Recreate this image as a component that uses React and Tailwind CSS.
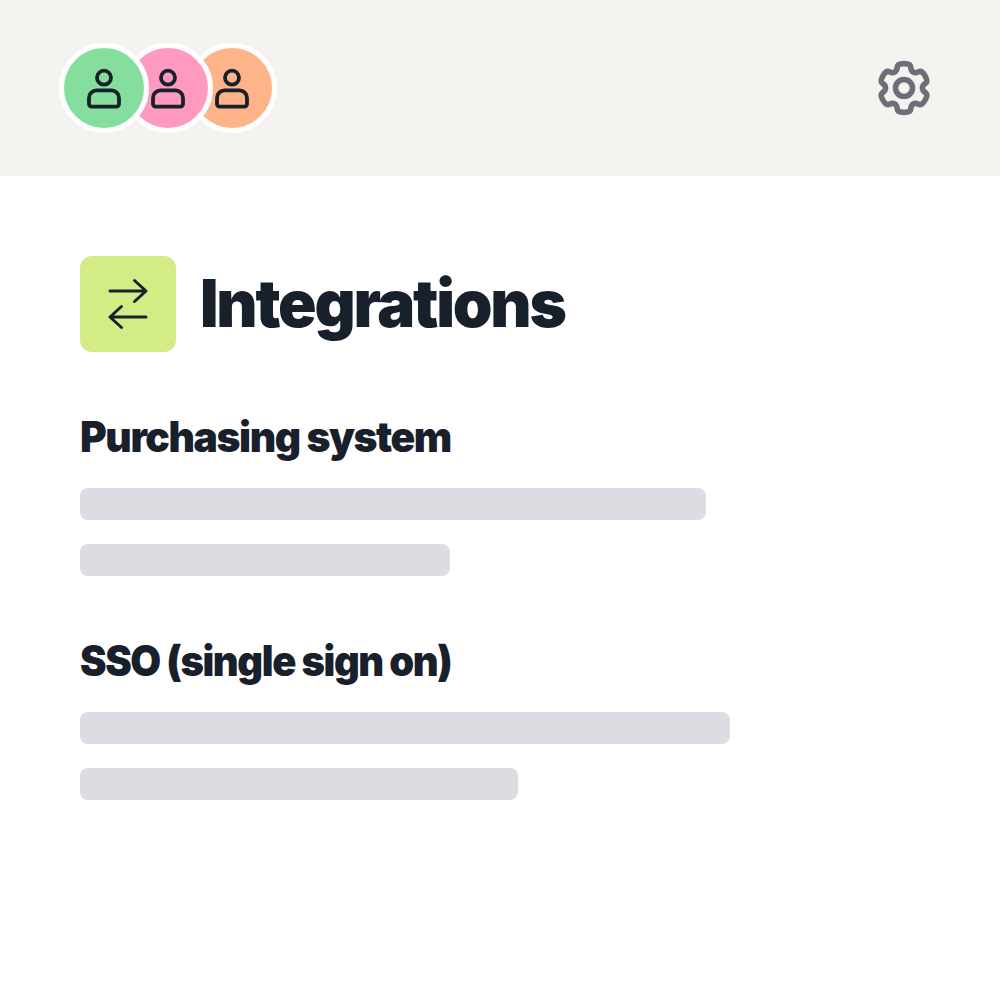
import React from "react";

function Person() {
  return (
    <svg width="48" height="48" viewBox="0 0 48 48" fill="none" stroke="#18202c" strokeWidth="3.8" strokeLinejoin="round">
      <circle cx="24" cy="13.7" r="7" />
      <path d="M16.5 26.4h15a7.5 7.5 0 0 1 7.5 7.5v6a2.7 2.7 0 0 1-2.7 2.7h-24.6a2.7 2.7 0 0 1-2.7-2.7v-6a7.5 7.5 0 0 1 7.5-7.5z" />
    </svg>
  );
}

function Avatar({ bg, z, first }) {
  return (
    <div className={`${bg} ${z} ${first ? "" : "-ml-[26px]"} relative flex h-[90px] w-[90px] items-center justify-center rounded-full border-[5px] border-white`}>
      <Person />
    </div>
  );
}

function gearPath() {
  const polar = (r, deg) => {
    const a = ((deg - 90) * Math.PI) / 180;
    return [32 + r * Math.cos(a), 32 + r * Math.sin(a)];
  };
  const pts = [];
  for (let i = 0; i < 6; i++) {
    const c = i * 60;
    pts.push(polar(25.2, c - 15), polar(25.2, c + 15), polar(18.6, c + 22), polar(18.6, c + 38));
  }
  const mid = (p, q) => [(p[0] + q[0]) / 2, (p[1] + q[1]) / 2];
  const fmt = (p) => `${p[0].toFixed(2)} ${p[1].toFixed(2)}`;
  let d = `M${fmt(mid(pts[pts.length - 1], pts[0]))}`;
  pts.forEach((p, i) => {
    d += `Q${fmt(p)} ${fmt(mid(p, pts[(i + 1) % pts.length]))}`;
  });
  return d + "Z";
}

function Gear() {
  return (
    <svg width="64" height="64" viewBox="0 0 64 64" fill="none" stroke="#6e6e78" strokeWidth="5.6" strokeLinejoin="round">
      <path d={gearPath()} />
      <circle cx="32" cy="32" r="8.5" />
    </svg>
  );
}

const heading = { fontFamily: '"Inter", "Liberation Sans", sans-serif' };

export default function App() {
  return (
    <div className="min-h-[1000px] bg-white">
      <header className="flex h-[176px] items-center justify-between bg-[#f4f3ef] pl-[59px] pr-[64px]">
        <div className="flex">
          <Avatar bg="bg-[#85de9e]" z="z-30" first />
          <Avatar bg="bg-[#ff99bf]" z="z-20" />
          <Avatar bg="bg-[#ffb388]" z="z-10" />
        </div>
        <Gear />
      </header>
      <main className="px-20 pt-20">
        <div className="flex items-center gap-6">
          <div className="flex h-24 w-24 items-center justify-center rounded-xl bg-[#d4ec86]">
            <svg width="64" height="64" viewBox="0 0 64 64" fill="none" stroke="#18202c" strokeWidth="3" strokeLinecap="round" strokeLinejoin="round">
              <path d="M14 19h36M38.5 8.5 50 19 38.5 29.5M50 45H14M25.5 34.5 14 45l11.5 10.5" />
            </svg>
          </div>
          <h1 style={heading} className="origin-left scale-x-[0.965] -translate-y-px text-[66px] leading-none font-black tracking-[-0.035em] whitespace-nowrap text-[#18202c]">Integrations</h1>
        </div>
        <h2 style={heading} className="mt-[57px] h-[56px] origin-left scale-x-[0.971] text-[42px] leading-[56px] font-black tracking-[-0.035em] whitespace-nowrap text-[#18202c]">Purchasing system</h2>
        <div className="mt-[23px] h-8 w-[626px] rounded-lg bg-[#dcdce2]" />
        <div className="mt-6 h-8 w-[370px] rounded-lg bg-[#dcdce2]" />
        <h2 style={heading} className="mt-[57px] h-[56px] origin-left scale-x-[0.949] text-[42px] leading-[56px] font-black tracking-[-0.035em] whitespace-nowrap text-[#18202c]">SSO (single sign on)</h2>
        <div className="mt-[23px] h-8 w-[650px] rounded-lg bg-[#dcdce2]" />
        <div className="mt-6 h-8 w-[438px] rounded-lg bg-[#dcdce2]" />
      </main>
    </div>
  );
}
